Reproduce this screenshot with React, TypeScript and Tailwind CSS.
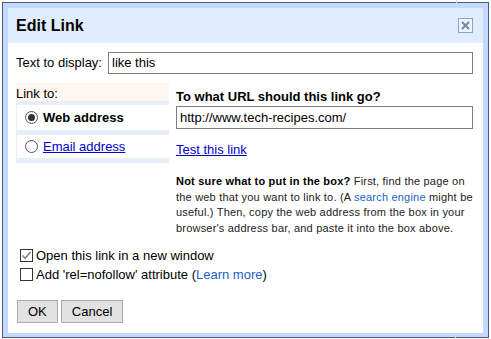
import React from 'react';

const Radio = ({ checked }: { checked?: boolean }) => (
  <span className="w-[13px] h-[13px] rounded-full border border-[#555] bg-white flex items-center justify-center shrink-0">
    {checked && <span className="w-[7px] h-[7px] rounded-full bg-[#333]" />}
  </span>
);

const Check = ({ checked }: { checked?: boolean }) => (
  <span className="w-[13px] h-[13px] border border-[#333] bg-white flex items-center justify-center shrink-0">
    {checked && (
      <svg width="11" height="11" viewBox="0 0 11 11">
        <path d="M1.5 5.5 L4.2 8.3 L9.5 2" fill="none" stroke="#777" strokeWidth="1.4" />
      </svg>
    )}
  </span>
);

const App = () => {
  return (
    <div className="relative w-[491px] h-[339px] bg-white font-['Liberation_Sans',Arial,sans-serif] text-[13px] text-black overflow-hidden">
      {/* page behind the dialog */}
      <div className="absolute left-[456px] top-0 w-px h-[3px] bg-[#ddd]" />
      <div className="absolute left-[455px] top-[337px] w-px h-[2px] bg-[#ddd]" />

      <div className="ml-[2px] mt-[2px] w-[487px] h-[336px] border border-[#4a5a78] bg-[#c3d9ff] p-[5px] pb-[4px]">
        <div className="bg-white h-full flex flex-col">
          <div className="h-[35px] bg-[#e0edfe] flex items-center justify-between pl-[8px] pr-[10px]">
            <span className="text-[16px] font-bold">Edit Link</span>
            <span className="w-[15px] h-[15px] border border-[#8aa4c8] bg-[#eef4fd] flex items-center justify-center">
              <svg width="11" height="11" viewBox="0 0 11 11">
                <path d="M2 2 L9 9 M9 2 L2 9" stroke="#6f88ab" strokeWidth="2" />
              </svg>
            </span>
          </div>

          <div className="pl-[8px] pr-[10px] pt-[9px]">
            <div className="flex items-center gap-[6px]">
              <span className="leading-[22px]">Text to display:</span>
              <div className="flex-1 h-[22px] border border-[#7d7d7d] flex items-center pl-[3px]">like this</div>
            </div>

            <div className="flex mt-[9px] gap-[7px]">
              <div className="w-[153px] shrink-0">
                <div className="h-[18px] bg-[#fdf6f1] leading-[15px] pt-[3px]">Link to:</div>
                <div className="bg-[#e8eef9] pl-px pt-[4px] pb-[5px] flex flex-col gap-[5px]">
                  <div className="h-[25px] bg-white flex items-center pl-[8px] gap-[5px]">
                    <Radio checked />
                    <span className="font-bold">Web address</span>
                  </div>
                  <div className="h-[23px] bg-white flex items-center pl-[8px] gap-[5px]">
                    <Radio />
                    <span className="text-[#0000cc] underline">Email address</span>
                  </div>
                </div>
              </div>

              <div className="flex-1 pt-[6px]">
                <div className="font-bold leading-[15px]">To what URL should this link go?</div>
                <div className="mt-[2px] h-[23px] border border-[#7d7d7d] flex items-center pl-[3px]">http://www.tech-recipes.com/</div>
                <div className="mt-[13px] leading-[15px]">
                  <span className="text-[#0000cc] underline">Test this link</span>
                </div>
                <p className="mt-[17px] text-[11px] leading-[15.5px] tracking-[0.2px] text-[#222]">
                  <span className="font-bold text-black">Not sure what to put in the box?</span> First, find the page on
                  the web that you want to link to. (A <span className="text-[#1a5fc8]">search engine</span> might be
                  useful.) Then, copy the web address from the box in your browser's address bar, and paste it into
                  the box above.
                </p>
              </div>
            </div>

            <div className="mt-[10px] flex flex-col pl-[4px]">
              <label className="h-[19px] flex items-center gap-[3px]">
                <Check checked />
                <span>Open this link in a new window</span>
              </label>
              <label className="h-[19px] flex items-center gap-[3px]">
                <Check />
                <span>
                  Add 'rel=nofollow' attribute (<span className="text-[#1a5fc8]">Learn more</span>)
                </span>
              </label>
            </div>

            <div className="mt-[16px] flex gap-[3px] pl-px">
              <button className="h-[23px] px-[10px] border border-[#aaa] bg-[#e1e1e1] text-[13px]">OK</button>
              <button className="h-[23px] px-[10px] border border-[#aaa] bg-[#e1e1e1] text-[13px]">Cancel</button>
            </div>
          </div>
        </div>
      </div>
    </div>
  );
};

export default App;
